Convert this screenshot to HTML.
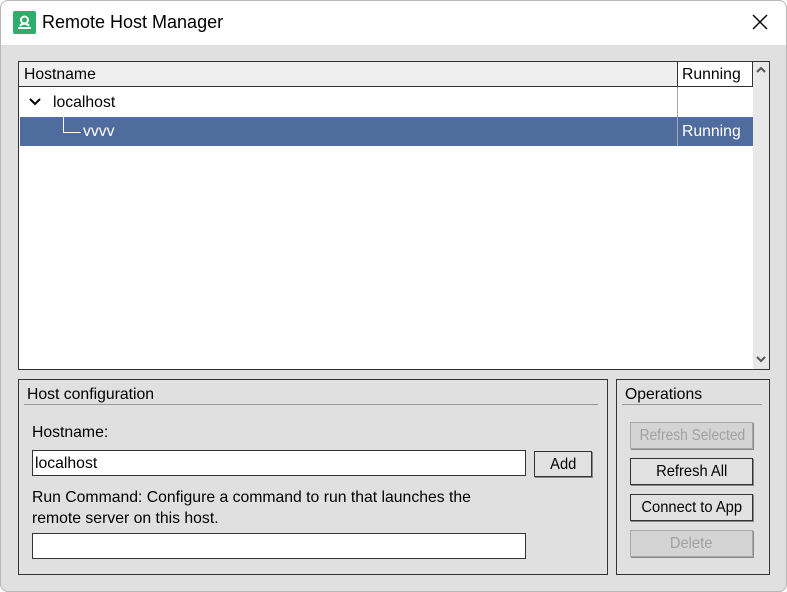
<!DOCTYPE html>
<html><head><style>
*{box-sizing:border-box;margin:0;padding:0}
body{width:787px;height:592px;background:#fff;font-family:"Liberation Sans",sans-serif;position:relative;overflow:hidden}
.win{position:absolute;left:0;top:0;width:787px;height:592px;border-radius:8px;background:#e0e0e0;overflow:hidden}
.frame{position:absolute;left:0;top:0;width:787px;height:592px;border:1px solid #b8b8b8;border-radius:8px;pointer-events:none}
.title{position:absolute;left:0;top:0;width:100%;height:45px;background:#fff}
.a{position:absolute;white-space:nowrap}
.t{font-size:16px;color:#000;transform-origin:0 0;transform:scaleX(0.985)}
.box{position:absolute;border:1px solid #333}
.inp{position:absolute;background:#fff;border:1px solid #333}
.btn{position:absolute;background:#e1e1e1;border:1px solid #333;box-shadow:1px 1px 0 #888;text-align:center;font-size:16px;line-height:25px;white-space:nowrap;overflow:hidden}
.btn span{display:inline-block;transform:scaleX(0.92)}
.dis{color:#a0a0a0;border-color:#aaa;background:#d4d4d4}
</style></head><body>
<div class="win">
<div class="title">
<div class="a" style="left:13px;top:11px;width:23px;height:23px;background:#2dae6a;border-radius:2px">
<svg width="23" height="23" viewBox="0 0 23 23"><circle cx="11.5" cy="9" r="3.5" fill="none" stroke="#fff" stroke-width="2"/><path d="M5 17h13" stroke="#fff" stroke-width="2"/><path d="M7 15a5 4 0 0 1 9 0" fill="none" stroke="#fff" stroke-width="2"/></svg></div>
<div class="a" style="left:42px;top:12px;font-size:18px">Remote Host Manager</div>
<svg class="a" style="left:751px;top:13px" width="18" height="18"><path d="M2 2L16 16M16 2L2 16" stroke="#000" stroke-width="1.4"/></svg>
</div>
<div class="box" style="left:18px;top:61px;width:752px;height:309px;background:#fff">
<div class="a" style="left:0;top:0;width:659px;height:25px;background:#efefef;border-bottom:1px solid #333;border-right:1px solid #333"></div>
<div class="a" style="left:659px;top:0;width:75px;height:25px;background:#fff;border-bottom:1px solid #333;border-right:1px solid #333"></div>
<div class="a t" style="left:5px;top:4px">Hostname</div>
<div class="a t" style="left:663px;top:4px">Running</div>
<div class="a" style="left:658px;top:25px;width:1px;height:59px;background:#aaa"></div>
<svg class="a" style="left:10px;top:35px" width="12" height="10"><path d="M1 2l5 5 5-5" fill="none" stroke="#000" stroke-width="2"/></svg>
<div class="a t" style="left:34px;top:32px">localhost</div>
<div class="a" style="left:1px;top:55px;width:733px;height:29px;background:#4f6c9f"></div>
<div class="a" style="left:658px;top:55px;width:1px;height:29px;background:#aaa"></div>
<div class="a" style="left:44px;top:55px;width:1px;height:15px;background:#fff"></div>
<div class="a" style="left:44px;top:70px;width:18px;height:1px;background:#fff"></div>
<div class="a t" style="left:64px;top:61px;color:#fff">vvvv</div>
<div class="a t" style="left:663px;top:61px;color:#fff">Running</div>
<div class="a" style="left:734px;top:0;width:16px;height:307px;background:#e8e8e8"></div>
<svg class="a" style="left:736px;top:4px" width="12" height="8"><path d="M2 6l4-4 4 4" fill="none" stroke="#555" stroke-width="2"/></svg>
<svg class="a" style="left:736px;top:293px" width="12" height="8"><path d="M2 2l4 4 4-4" fill="none" stroke="#555" stroke-width="2"/></svg>
</div>
<div class="box" style="left:18px;top:379px;width:590px;height:196px"></div>
<div class="a t" style="left:27px;top:386px">Host configuration</div>
<div class="a" style="left:24px;top:404px;width:574px;height:1px;background:#999"></div>
<div class="a t" style="left:32px;top:424px">Hostname:</div>
<div class="inp" style="left:32px;top:450px;width:494px;height:26px"></div>
<div class="a t" style="left:35px;top:455px">localhost</div>
<div class="btn" style="left:534px;top:451px;width:58px;height:26px"><span>Add</span></div>
<div class="a t" style="left:32px;top:487px;line-height:21px">Run Command: Configure a command to run that launches the<br>remote server on this host.</div>
<div class="inp" style="left:32px;top:533px;width:494px;height:26px"></div>
<div class="box" style="left:616px;top:379px;width:154px;height:196px"></div>
<div class="a t" style="left:625px;top:386px">Operations</div>
<div class="a" style="left:622px;top:404px;width:140px;height:1px;background:#999"></div>
<div class="btn dis" style="left:630px;top:422px;width:123px;height:27px"><span style="transform:scaleX(0.86)">Refresh Selected</span></div>
<div class="btn" style="left:630px;top:458px;width:123px;height:27px"><span>Refresh All</span></div>
<div class="btn" style="left:630px;top:494px;width:123px;height:27px"><span>Connect to App</span></div>
<div class="btn dis" style="left:630px;top:530px;width:123px;height:27px"><span>Delete</span></div>
</div>
<div class="frame"></div>
</body></html>
